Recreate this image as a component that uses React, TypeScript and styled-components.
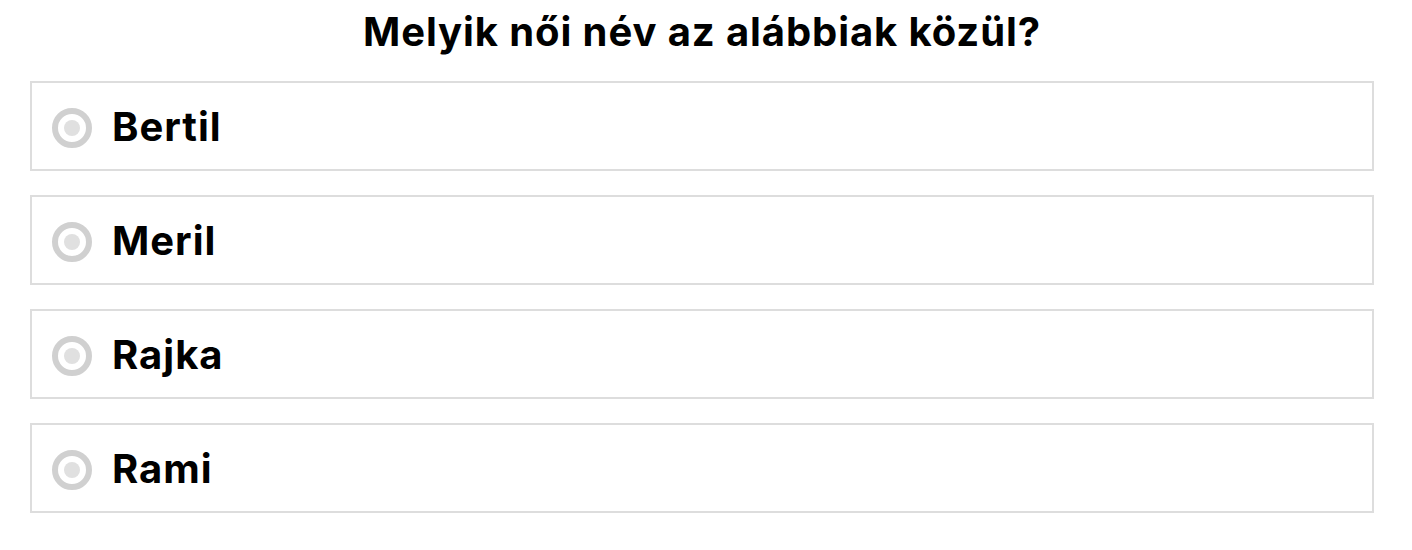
import React from "react";
import styled, { createGlobalStyle } from "styled-components";

const Global = createGlobalStyle`
  html, body { margin: 0; padding: 0; background: #fff; }
  body { font-family: "Inter", "DejaVu Sans", sans-serif; color: #000; }
`;

const Page = styled.div`
  padding: 0 38px 0 30px;
  display: flex;
  flex-direction: column;
`;

const Title = styled.h1`
  margin: 0;
  height: 81px;
  display: flex;
  align-items: center;
  justify-content: center;
  font-size: 40px;
  font-weight: 700;
  line-height: 1;
  letter-spacing: 0.9px;
  padding-bottom: 17px;
  box-sizing: border-box;
`;

const List = styled.div`
  display: flex;
  flex-direction: column;
  gap: 24px;
`;

const Option = styled.label`
  display: flex;
  align-items: center;
  gap: 20px;
  height: 90px;
  box-sizing: border-box;
  border: 2px solid #dddddd;
  padding: 0 20px;
  cursor: pointer;
`;

const Radio = styled.span`
  width: 40px;
  height: 40px;
  box-sizing: border-box;
  border-radius: 50%;
  border: 6px solid #d0d0d0;
  display: flex;
  align-items: center;
  justify-content: center;
  margin-top: 4px;
  &::after {
    content: "";
    width: 16px;
    height: 16px;
    border-radius: 50%;
    background: #e0e0e0;
  }
`;

const Label = styled.span`
  font-size: 40px;
  font-weight: 700;
  line-height: 1;
  letter-spacing: 1px;
  margin-top: 2px;
`;

const options = ["Bertil", "Meril", "Rajka", "Rami"];

export default function App() {
  return (
    <>
      <Global />
      <Page>
        <Title>Melyik női név az alábbiak közül?</Title>
        <List>
          {options.map((o) => (
            <Option key={o}>
              <Radio />
              <Label>{o}</Label>
            </Option>
          ))}
        </List>
      </Page>
    </>
  );
}
